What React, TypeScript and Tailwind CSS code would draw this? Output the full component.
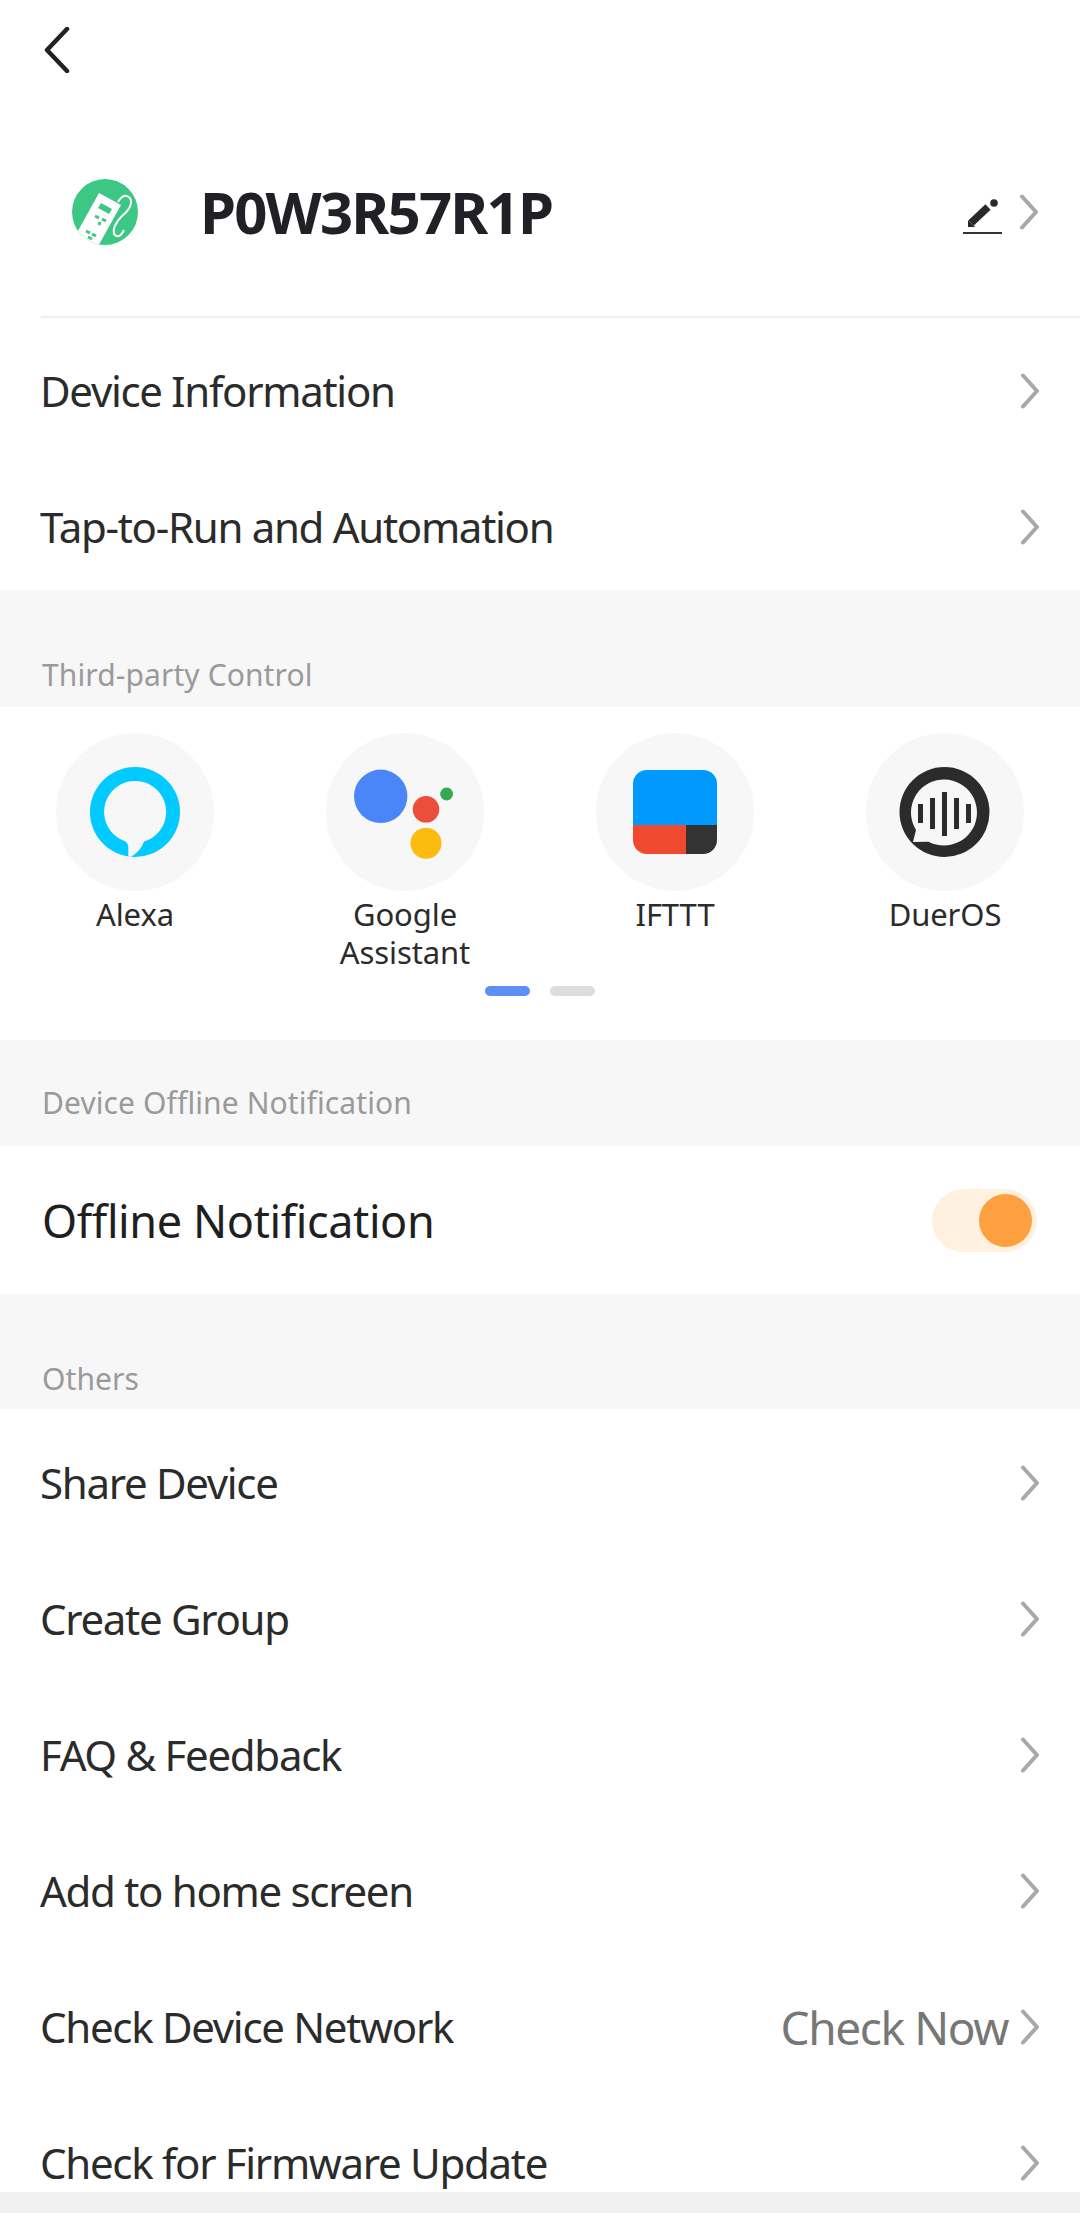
const font = "font-['Noto_Sans','Open_Sans',sans-serif]";

function Chevron({ className = '' }: { className?: string }) {
    return (
        <svg width="20" height="36" viewBox="0 0 20 36" fill="none" className={className}>
            <path d="M3 2.5 L17 18 L3 33.5" stroke="#a8a8a8" strokeWidth="4" strokeLinecap="round" strokeLinejoin="round" />
        </svg>
    );
}

function PlugIcon() {
    return (
        <svg width="66" height="68" viewBox="0 0 66 68">
            <defs>
                <clipPath id="plugClip">
                    <circle cx="33" cy="34" r="33" />
                </clipPath>
            </defs>
            <circle cx="33" cy="34" r="33" fill="#3dc784" />
            <g clipPath="url(#plugClip)">
                <path d="M27 15 L49 27 L24 72 L2 60 Z" fill="#fff" />
                <path d="M29 25 L40 31 L37 36 L26 30 Z" fill="#3dc784" />
                <path d="M23 38 L27 40 M30 41 L34 43 M26 45 L29 46" stroke="#3dc784" strokeWidth="3" />
                <path d="M14 53 L18 55 M20 56 L24 58 M16 59 L20 61" stroke="#3dc784" strokeWidth="3" />
                <path d="M46 24 Q52 14 58 20 Q62 28 50 38 Q40 48 42 56 Q47 62 52 52" fill="none" stroke="#fff" strokeWidth="2" />
            </g>
        </svg>
    );
}

function AlexaIcon() {
    return (
        <svg width="158" height="158" viewBox="0 0 158 158">
            <path
                fillRule="evenodd"
                fill="#00caff"
                d="M79 34 A45 45 0 1 1 79 124 A45 45 0 1 1 79 34 Z M72.3 123.7 L72.3 114 Q72 108.5 66 107 A31 31 0 1 1 88 108.6 Q85 118 75 123.7 Z"
            />
        </svg>
    );
}

function GoogleIcon() {
    return (
        <svg width="158" height="158" viewBox="0 0 158 158">
            <circle cx="54.7" cy="63.3" r="26.7" fill="#4a86f7" />
            <circle cx="100" cy="76.3" r="13.3" fill="#ea4e3d" />
            <circle cx="120.6" cy="61" r="6.4" fill="#34a853" />
            <circle cx="100" cy="110.3" r="15.5" fill="#fbbc0f" />
        </svg>
    );
}

function IftttIcon() {
    return (
        <div className="flex h-[84px] w-[84px] flex-col overflow-hidden rounded-[14px]">
            <div className="h-[55px] bg-[#0099ff]" />
            <div className="flex flex-1">
                <div className="w-[53px] bg-[#ef4a2f]" />
                <div className="flex-1 bg-[#333333]" />
            </div>
        </div>
    );
}

function DuerIcon() {
    const bars = [
        { x: 52, y: 71, h: 19 },
        { x: 64, y: 65, h: 31 },
        { x: 76, y: 59, h: 44 },
        { x: 88, y: 65, h: 31 },
        { x: 100, y: 71, h: 19 },
    ];
    return (
        <svg width="158" height="158" viewBox="0 0 158 158">
            <path
                fillRule="evenodd"
                fill="#2b2b2b"
                d="M78.5 34 A45 45 0 1 1 78.5 124 A45 45 0 1 1 78.5 34 Z M47 109 L62.6 108.7 A33 33 0 1 0 50 97 Z"
            />
            {bars.map((b) => (
                <rect key={b.x} x={b.x} y={b.y} width="5" height={b.h} fill="#2b2b2b" />
            ))}
        </svg>
    );
}

function Row({ label, value }: { label: string; value?: string }) {
    return (
        <div className="flex h-[136px] shrink-0 items-center justify-between pl-[40px] pr-[40px]">
            <span className="text-[42px] leading-none tracking-[-1.3px] text-[#2b2b2b]">{label}</span>
            <div className="flex items-center gap-[12px]">
                {value && <span className="text-[46px] leading-none tracking-[-1.4px] text-[#777777]">{value}</span>}
                <Chevron />
            </div>
        </div>
    );
}

function SectionLabel({ children, className }: { children: string; className: string }) {
    return (
        <div className={`flex bg-[#f7f7f7] pl-[42px] text-[30px] leading-none tracking-[0.1px] text-[#9a9a9a] ${className}`}>
            {children}
        </div>
    );
}

function Service({ icon, label }: { icon: React.ReactNode; label: string }) {
    return (
        <div className="flex flex-col items-center">
            <div className="flex h-[158px] w-[158px] items-center justify-center rounded-full bg-[#f7f7f7]">{icon}</div>
            <div className="mt-[4px] w-[158px] text-center text-[31px] leading-[38px] tracking-[-0.1px] text-[#2b2b2b]">{label}</div>
        </div>
    );
}

export default function App() {
    return (
        <div className={`flex h-[2213px] w-[1080px] flex-col overflow-hidden bg-white ${font}`}>
            <div className="flex-1 overflow-hidden">
                <div className="flex h-[100px] items-center pl-[44px]">
                    <svg width="26" height="46" viewBox="0 0 26 46" fill="none">
                        <path d="M23 2 L3 23 L23 44" stroke="#222" strokeWidth="4.5" strokeLinecap="round" strokeLinejoin="round" />
                    </svg>
                </div>

                <div className="ml-[41px] flex h-[218px] items-center border-b-2 border-[#eeeeee] pt-[8px]">
                    <div className="ml-[31px]">
                        <PlugIcon />
                    </div>
                    <h1 className="ml-[62px] text-[58px] font-bold leading-none tracking-[-1.8px] text-[#1f2126]">P0W3R57R1P</h1>
                    <div className="ml-auto mr-[41px] flex items-center gap-[16px]">
                        <svg width="40" height="36" viewBox="0 0 40 36" fill="none" className="mt-[8px]">
                            <path d="M5 29 L5 22 L12 29 Z" fill="#2a2a2a" />
                            <path d="M8 25 L25 9" stroke="#2a2a2a" strokeWidth="7.5" />
                            <circle cx="31" cy="5" r="3.8" fill="#2a2a2a" />
                            <rect x="0" y="34" width="39" height="2" fill="#333" />
                        </svg>
                        <Chevron />
                    </div>
                </div>

                <div className="flex h-[272px] flex-col overflow-hidden pt-[5px]">
                    <Row label="Device Information" />
                    <Row label="Tap-to-Run and Automation" />
                </div>

                <SectionLabel className="h-[117px] items-end pb-[17px]">Third-party Control</SectionLabel>

                <div className="h-[333px] bg-white pt-[26px]">
                    <div className="grid grid-cols-4 justify-items-center">
                        <Service icon={<AlexaIcon />} label="Alexa" />
                        <Service icon={<GoogleIcon />} label="Google Assistant" />
                        <Service icon={<IftttIcon />} label="IFTTT" />
                        <Service icon={<DuerIcon />} label="DuerOS" />
                    </div>
                    <div className="mt-[15px] flex justify-center gap-[20px]">
                        <div className="h-[10px] w-[45px] rounded-full bg-[#5b8ff5]" />
                        <div className="h-[10px] w-[45px] rounded-full bg-[#dddddd]" />
                    </div>
                </div>

                <SectionLabel className="h-[106px] items-center pt-[20px]">Device Offline Notification</SectionLabel>

                <div className="flex h-[148px] items-center justify-between pl-[42px] pr-[43px]">
                    <span className="text-[45px] leading-none tracking-[-0.4px] text-[#1f1f1f]">Offline Notification</span>
                    <div className="flex h-[63px] w-[105px] items-center justify-end rounded-full bg-[#fff0e0] pr-[5px]">
                        <div className="h-[53px] w-[53px] rounded-full bg-[#ffa040]" />
                    </div>
                </div>

                <SectionLabel className="h-[115px] items-center pt-[54px]">Others</SectionLabel>

                <div className="flex flex-col pt-[6px]">
                    <Row label="Share Device" />
                    <Row label="Create Group" />
                    <Row label="FAQ & Feedback" />
                    <Row label="Add to home screen" />
                    <Row label="Check Device Network" value="Check Now" />
                    <Row label="Check for Firmware Update" />
                </div>
            </div>
            <div className="h-[21px] shrink-0 bg-[#f0f0f0]" />
        </div>
    );
}
